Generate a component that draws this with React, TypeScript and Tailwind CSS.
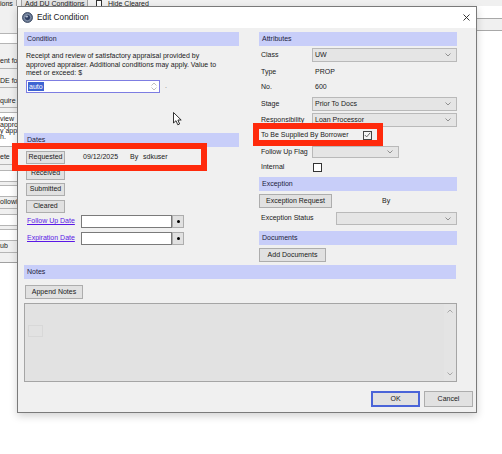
import React from 'react';

function SectionHeader({ title, className = '' }: { title: string; className?: string }) {
  return (
    <div className={`h-[14px] shrink-0 bg-[#c8cef9] pl-[3px] text-[7px] leading-[14px] text-[#1c1c3c] ${className}`}>
      {title}
    </div>
  );
}

function WinButton({ label, className = '' }: { label: string; className?: string }) {
  return (
    <div
      className={`flex shrink-0 items-center justify-center border border-[#adadad] bg-[#e1e1e1] text-[7px] text-[#1a1a1a] ${className}`}
    >
      {label}
    </div>
  );
}

function Chevron({ up = false }: { up?: boolean }) {
  return (
    <svg width="6" height="4" viewBox="0 0 6 4">
      <polyline
        points={up ? '0.5,3.5 3,1 5.5,3.5' : '0.5,0.5 3,3 5.5,0.5'}
        fill="none"
        stroke="#7a7a7a"
        strokeWidth="0.8"
      />
    </svg>
  );
}

function WinSelect({ value = '', className = '' }: { value?: string; className?: string }) {
  return (
    <div
      className={`flex shrink-0 items-center justify-between border border-[#b9b9b9] bg-[#e5e5e5] pl-[2px] pr-[5px] text-[7px] text-[#1a1a1a] ${className}`}
    >
      <span>{value}</span>
      <Chevron />
    </div>
  );
}

function Cell({ text, className = '' }: { text: string; className?: string }) {
  return (
    <div className={`flex shrink-0 items-center overflow-hidden whitespace-nowrap border-b border-[#b5b5b5] text-[7px] text-[#1a1a1a] ${className}`}>
      {text}
    </div>
  );
}

export default function App() {
  return (
    <div className="relative h-[454px] w-[502px] overflow-hidden bg-white font-['Liberation_Sans',Arial,sans-serif]">
      {/* background window: tab strip */}
      <div className="flex h-[6px] overflow-hidden bg-[#f0f0f0] text-[7px] leading-[7px] text-[#1a1a1a]">
        <div className="w-[17px] shrink-0 overflow-hidden whitespace-nowrap border-r border-[#a0a0a0] bg-[#e4e4e4]">ions</div>
        <div className="ml-[4px] w-[67px] shrink-0 whitespace-nowrap border-x border-[#a0a0a0] bg-[#e4e4e4] pl-[3px]">
          Add DU Conditions
        </div>
        <div className="ml-[8px] h-[7px] w-[6px] shrink-0 border border-[#333] bg-white" />
        <span className="ml-[6px] whitespace-nowrap">Hide Cleared</span>
      </div>

      {/* background window: body */}
      <div className="flex h-[448px]">
        <div className="flex w-[17px] shrink-0 flex-col">
          <div className="flex h-[257px] flex-col border-b border-[#a0a0a0] bg-[#f0f0f0]">
            <div className="h-[27px] shrink-0" />
            <div className="h-[11px] shrink-0 border-y border-[#b5b5b5] bg-white" />
            <div className="h-[11px] shrink-0" />
            <Cell text="ent fo" className="h-[14px]" />
            <div className="h-[6px] shrink-0" />
            <Cell text="DE for" className="h-[13px]" />
            <div className="h-[7px] shrink-0" />
            <Cell text="quire" className="h-[13px]" />
            <div className="h-[4px] shrink-0" />
            <div className="flex h-[35px] shrink-0 flex-col overflow-hidden whitespace-nowrap border-y border-[#b5b5b5] bg-white pt-[3px] text-[7px] leading-[6px] text-[#1a1a1a]">
              <span>view</span>
              <span>approv</span>
              <span>y app</span>
              <span>n.</span>
            </div>
            <div className="h-[3px] shrink-0" />
            <Cell text="ete" className="h-[15px]" />
            <div className="h-[5px] shrink-0" />
            <div className="h-[12px] shrink-0 border-y border-[#b5b5b5] bg-white" />
            <div className="h-[3px] shrink-0" />
            <div className="h-[12px] shrink-0 border-y border-[#b5b5b5] bg-white" />
            <Cell text="ollowi" className="h-[12px]" />
            <div className="h-[5px] shrink-0" />
            <div className="h-[12px] shrink-0 border-y border-[#b5b5b5] bg-white" />
            <div className="h-[3px] shrink-0" />
            <div className="h-[12px] shrink-0 border-y border-[#b5b5b5] bg-white" />
            <Cell text="ub" className="h-[12px]" />
          </div>
        </div>
        <div className="flex-1" />
        <div className="flex w-[25px] shrink-0 flex-col">
          <div className="h-[12px] bg-white" />
          <div className="h-[13px] border-y border-[#a8a8a8] bg-[#f0f0f0]" />
        </div>
      </div>

      {/* dialog window */}
      <div className="absolute left-[17px] top-[6px] flex h-[407px] w-[460px] flex-col border border-[#7a7a7a] bg-[#f0f0f0] shadow-[0_3px_8px_rgba(0,0,0,0.18)]">
        {/* title bar */}
        <div className="flex h-[21px] shrink-0 items-center bg-white pl-[4px] pr-[6px]">
          <svg width="11" height="11" viewBox="0 0 11 11">
            <circle cx="5.5" cy="5.5" r="5" fill="#66768f" stroke="#2c3a55" strokeWidth="0.8" />
            <circle cx="5.5" cy="5.5" r="3.2" fill="#2f3f62" stroke="#b3bfd2" strokeWidth="0.6" />
            <ellipse cx="4.7" cy="4.5" rx="1.4" ry="1" fill="#c9d3e3" opacity="0.85" />
          </svg>
          <span className="ml-[4px] text-[8.3px] text-[#1a1a1a]">Edit Condition</span>
          <svg className="ml-auto" width="7" height="7" viewBox="0 0 7 7">
            <path d="M0.5 0.5 L6.5 6.5 M6.5 0.5 L0.5 6.5" stroke="#222" strokeWidth="0.9" />
          </svg>
        </div>

        {/* client area */}
        <div className="flex flex-1 flex-col pl-[6px] pt-[4px] text-[7px] text-[#1a1a1a]">
          <div className="flex gap-[20px]">
            {/* left column */}
            <div className="flex w-[215px] flex-col">
              <SectionHeader title="Condition" />
              <div className="ml-[2px] mt-[6px] whitespace-nowrap leading-[8.7px]">
                Receipt and review of satisfactory appraisal provided by
                <br />
                approved appraiser. Additional conditions may apply. Value to
                <br />
                meet or exceed: $
              </div>
              <div className="ml-[2px] mt-[2px] flex h-[13px] items-center">
                <div className="flex h-[13px] w-[134px] items-center justify-between border border-[#7d7de2] bg-white pl-[1px] pr-[2px]">
                  <span className="bg-[#3d63d2] px-[1px] leading-[9px] text-white">auto</span>
                  <div className="flex flex-col items-center gap-[1px] opacity-60">
                    <Chevron up />
                    <Chevron />
                  </div>
                </div>
                <span className="ml-[5px] text-[#777]">.</span>
              </div>

              <SectionHeader title="Dates" className="mt-[40px]" />
              <div className="ml-[2px] mt-[4px] flex h-[13px] items-center">
                <WinButton label="Requested" className="h-[13px] w-[39px]" />
                <span className="ml-[18px] w-[47px] shrink-0">09/12/2025</span>
                <span className="w-[13px] shrink-0">By</span>
                <span>sdkuser</span>
              </div>
              <WinButton label="Received" className="ml-[2px] mt-[3px] h-[13px] w-[39px]" />
              <WinButton label="Submitted" className="ml-[2px] mt-[3px] h-[13px] w-[39px]" />
              <WinButton label="Cleared" className="ml-[2px] mt-[4px] h-[13px] w-[39px]" />
              <div className="mt-[2px] flex h-[13px] items-center">
                <span className="w-[57px] shrink-0 pl-[3px] text-[#5a18e6] underline">Follow Up Date</span>
                <div className="h-[13px] w-[91px] shrink-0 border border-[#7a7a7a] bg-white" />
                <div className="flex h-[13px] w-[12px] shrink-0 items-center justify-center border border-[#adadad] bg-[#e1e1e1]">
                  <div className="h-[3px] w-[3px] rounded-full bg-black" />
                </div>
              </div>
              <div className="mt-[4px] flex h-[13px] items-center">
                <span className="w-[57px] shrink-0 pl-[3px] text-[#5a18e6] underline">Expiration Date</span>
                <div className="h-[13px] w-[91px] shrink-0 border border-[#7a7a7a] bg-white" />
                <div className="flex h-[13px] w-[12px] shrink-0 items-center justify-center border border-[#adadad] bg-[#e1e1e1]">
                  <div className="h-[3px] w-[3px] rounded-full bg-black" />
                </div>
              </div>
            </div>

            {/* right column */}
            <div className="flex w-[198px] flex-col">
              <SectionHeader title="Attributes" />
              <div className="mt-[2px] flex h-[14px] items-center">
                <span className="w-[53px] shrink-0 pl-[2px]">Class</span>
                <WinSelect value="UW" className="h-[14px] w-[145px]" />
              </div>
              <div className="mt-[3px] flex h-[14px] items-center">
                <span className="w-[56px] shrink-0 pl-[2px]">Type</span>
                <span>PROP</span>
              </div>
              <div className="mt-[1px] flex h-[14px] items-center">
                <span className="w-[56px] shrink-0 pl-[2px]">No.</span>
                <span>600</span>
              </div>
              <div className="mt-[3px] flex h-[14px] items-center">
                <span className="w-[53px] shrink-0 pl-[2px]">Stage</span>
                <WinSelect value="Prior To Docs" className="h-[14px] w-[145px]" />
              </div>
              <div className="mt-[2px] flex h-[14px] items-center">
                <span className="w-[53px] shrink-0 pl-[2px]">Responsibility</span>
                <WinSelect value="Loan Processor" className="h-[14px] w-[145px]" />
              </div>
              <div className="mt-[2px] flex h-[12px] items-center">
                <span className="w-[104px] shrink-0 whitespace-nowrap pl-[2px]">To Be Supplied By Borrower</span>
                <div className="flex h-[9px] w-[9px] shrink-0 items-center justify-center border border-[#444] bg-[#f4f4f4]">
                  <svg width="7" height="6" viewBox="0 0 7 6">
                    <polyline points="0.8,3 2.7,4.9 6.2,0.8" fill="none" stroke="#555" strokeWidth="0.9" />
                  </svg>
                </div>
              </div>
              <div className="mt-[5px] flex h-[12px] items-center">
                <span className="w-[53px] shrink-0 pl-[2px]">Follow Up Flag</span>
                <WinSelect className="h-[12px] w-[87px]" />
              </div>
              <div className="mt-[4px] flex h-[11px] items-center">
                <span className="w-[54px] shrink-0 pl-[2px]">Internal</span>
                <div className="h-[9px] w-[9px] shrink-0 border border-[#333] bg-white" />
              </div>

              <SectionHeader title="Exception" className="mt-[4px]" />
              <div className="mt-[3px] flex h-[14px] items-center">
                <WinButton label="Exception Request" className="h-[14px] w-[73px]" />
                <span className="ml-[50px]">By</span>
              </div>
              <div className="mt-[4px] flex h-[13px] items-center">
                <span className="w-[77px] shrink-0 pl-[2px]">Exception Status</span>
                <WinSelect className="h-[13px] w-[121px]" />
              </div>

              <SectionHeader title="Documents" className="mt-[6px]" />
              <WinButton label="Add Documents" className="mt-[3px] h-[14px] w-[67px]" />
            </div>
          </div>

          {/* notes */}
          <SectionHeader title="Notes" className="mt-[3px] w-[432px]" />
          <WinButton label="Append Notes" className="ml-[1px] mt-[6px] h-[14px] w-[58px]" />
          <div className="mt-[4px] flex h-[79px] w-[433px] border border-[#a5a5a5] bg-[#e2e2e2]">
            <div className="flex-1 pl-[3px] pt-[21px]">
              <div className="h-[12px] w-[15px] border border-[#d8d8d8]" />
            </div>
            <div className="flex w-[12px] flex-col items-center justify-between bg-[#e6e6e6] py-[5px] opacity-70">
              <Chevron up />
              <Chevron />
            </div>
          </div>

          {/* dialog buttons */}
          <div className="mt-[9px] flex h-[16px] justify-end gap-[4px] pr-[3px]">
            <div className="flex h-[16px] w-[49px] items-center justify-center border-[2px] border-[#4a64d8] bg-[#e1e1e1] text-[7px]">
              OK
            </div>
            <WinButton label="Cancel" className="h-[16px] w-[49px]" />
          </div>
        </div>
      </div>

      {/* annotation boxes */}
      <div className="pointer-events-none absolute left-[12px] top-[143px] h-[28px] w-[195px] border-[6px] border-[#ff2a0c]" />
      <div className="pointer-events-none absolute left-[253px] top-[123px] h-[23px] w-[130px] border-[6px] border-[#ff2a0c]" />

      {/* mouse pointer */}
      <svg className="pointer-events-none absolute left-[173px] top-[112px]" width="10" height="14" viewBox="0 0 10 14">
        <path
          d="M0.5 0.5 L0.5 11 L3 8.7 L4.8 12.8 L6.6 12 L4.9 8 L8.2 8 Z"
          fill="#fff"
          stroke="#000"
          strokeWidth="0.8"
          strokeLinejoin="round"
        />
      </svg>
    </div>
  );
}
